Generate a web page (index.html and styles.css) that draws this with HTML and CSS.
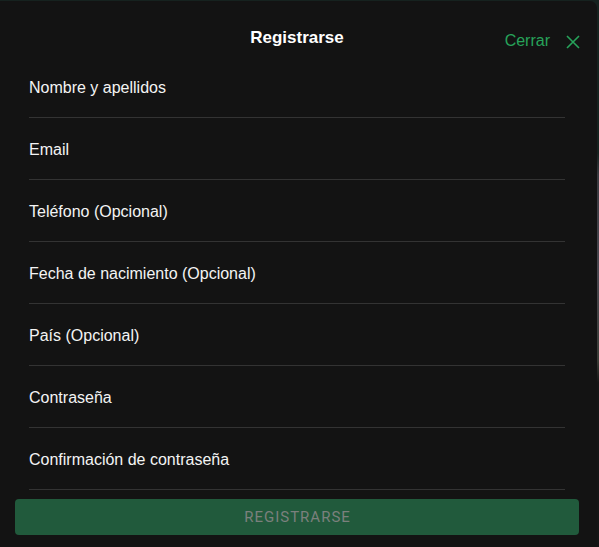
FILE: index.html
```html
<!DOCTYPE html>
<html lang="es">
<head>
<meta charset="utf-8">
<title>Registrarse</title>
<link rel="stylesheet" href="styles.css">
</head>
<body>
<div class="backdrop">
  <div class="modal">
    <div class="header">
      <div class="spacer"></div>
      <h1 class="title">Registrarse</h1>
      <button class="close" type="button">
        <span class="close-text">Cerrar</span>
        <svg class="close-icon" width="14" height="14" viewBox="0 0 14 14" aria-hidden="true">
          <path d="M1 1 L13 13 M13 1 L1 13" stroke="#27a35a" stroke-width="1.6" fill="none"/>
        </svg>
      </button>
    </div>
    <div class="fields">
      <div class="field">Nombre y apellidos</div>
      <div class="field">Email</div>
      <div class="field">Teléfono (Opcional)</div>
      <div class="field">Fecha de nacimiento (Opcional)</div>
      <div class="field">País (Opcional)</div>
      <div class="field">Contraseña</div>
      <div class="field">Confirmación de contraseña</div>
    </div>
    <button class="submit" type="button">REGISTRARSE</button>
  </div>
</div>
</body>
</html>
```
FILE: styles.css
```css
html, body {
  margin: 0;
  padding: 0;
  height: 100%;
}
body {
  background: linear-gradient(180deg, #16221f 0%, #16221f 28%, #3a3a40 32%, #4a4850 50%, #3a3c36 66%, #151515 70%, #151515 100%);
  font-family: "Liberation Sans", Arial, sans-serif;
  overflow: hidden;
}
.backdrop {
  padding-top: 1px;
  width: 597px;
}
.modal {
  background: #131313;
  border-top-right-radius: 7px;
  padding: 0 18px 11px 15px;
  height: 546px;
  box-sizing: border-box;
}
.header {
  display: grid;
  grid-template-columns: 1fr auto 1fr;
  align-items: start;
  height: 55px;
  box-sizing: border-box;
  padding-top: 27px;
}
.title {
  margin: 0;
  font-size: 17px;
  line-height: 20px;
  font-weight: bold;
  color: #ffffff;
}
.close {
  justify-self: end;
  display: flex;
  align-items: center;
  gap: 16px;
  margin: 3px -1px 0 0;
  padding: 0;
  background: none;
  border: 0;
  font-family: "Liberation Sans", Arial, sans-serif;
  cursor: pointer;
}
.close-text {
  font-size: 16px;
  line-height: 20px;
  color: #27a35a;
}
.close-icon {
  display: block;
  margin-top: 1px;
}
.fields {
  margin: 0 14px;
}
.field {
  padding: 23px 0 20px;
  font-size: 16px;
  line-height: 18px;
  color: #f4f4f4;
  border-bottom: 1px solid #333333;
}
.submit {
  display: block;
  width: 100%;
  height: 36px;
  margin-top: 9px;
  border: 0;
  border-radius: 4px;
  background: #215a3c;
  color: #7b807d;
  font-family: Roboto, "Liberation Sans", sans-serif;
  font-size: 15px;
  letter-spacing: 1px;
  padding: 0 0 0 1px;
}
```
